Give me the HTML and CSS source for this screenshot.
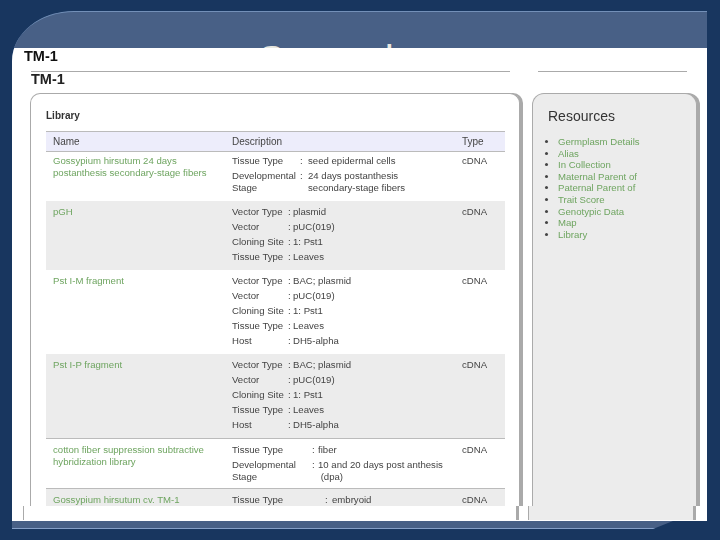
FILE: index.html
```html
<!DOCTYPE html>
<html lang="en">
<head>
<meta charset="utf-8">
<title>TM-1</title>
<link rel="stylesheet" href="styles.css">
</head>
<body>
<div class="slide">
  <div class="slide-title">Second</div>
  <div class="sheet">
    <div class="sheet-title">TM-1</div>
    <div class="rules"><span class="rule rule-main"></span><span class="rule rule-side"></span></div>
    <h1 class="page-title">TM-1</h1>
    <div class="columns">
      <section class="library">
        <h2 class="library-title">Library</h2>
        <table class="lib-table">
          <thead>
            <tr><th class="c-name"><span class="soft">Name</span></th><th class="c-desc"><span class="soft">Description</span></th><th><span class="soft">Type</span></th></tr>
          </thead>
          <tbody>
            <tr class="first">
              <td><a class="link">Gossypium hirsutum 24 days postanthesis secondary-stage fibers</a></td>
              <td><div class="spec spec-a">
                <span>Tissue Type</span><span>:</span><span>seed epidermal cells</span>
                <span>Developmental Stage</span><span>:</span><span>24 days postanthesis<br>secondary-stage fibers</span>
              </div></td>
              <td><span class="soft">cDNA</span></td>
            </tr>
            <tr class="alt">
              <td><a class="link">pGH</a></td>
              <td><div class="spec spec-b">
                <span>Vector Type</span><span>:</span><span>plasmid</span>
                <span>Vector</span><span>:</span><span>pUC(019)</span>
                <span>Cloning Site</span><span>:</span><span>1: Pst1</span>
                <span>Tissue Type</span><span>:</span><span>Leaves</span>
              </div></td>
              <td><span class="soft">cDNA</span></td>
            </tr>
            <tr>
              <td><a class="link">Pst I-M fragment</a></td>
              <td><div class="spec spec-b">
                <span>Vector Type</span><span>:</span><span>BAC; plasmid</span>
                <span>Vector</span><span>:</span><span>pUC(019)</span>
                <span>Cloning Site</span><span>:</span><span>1: Pst1</span>
                <span>Tissue Type</span><span>:</span><span>Leaves</span>
                <span>Host</span><span>:</span><span>DH5-alpha</span>
              </div></td>
              <td><span class="soft">cDNA</span></td>
            </tr>
            <tr class="alt">
              <td><a class="link">Pst I-P fragment</a></td>
              <td><div class="spec spec-b">
                <span>Vector Type</span><span>:</span><span>BAC; plasmid</span>
                <span>Vector</span><span>:</span><span>pUC(019)</span>
                <span>Cloning Site</span><span>:</span><span>1: Pst1</span>
                <span>Tissue Type</span><span>:</span><span>Leaves</span>
                <span>Host</span><span>:</span><span>DH5-alpha</span>
              </div></td>
              <td><span class="soft">cDNA</span></td>
            </tr>
            <tr class="ruled">
              <td><a class="link">cotton fiber suppression subtractive hybridization library</a></td>
              <td><div class="spec spec-c">
                <span>Tissue Type</span><span>:</span><span>fiber</span>
                <span>Developmental Stage</span><span>:</span><span>10 and 20 days post anthesis<br>&nbsp;(dpa)</span>
              </div></td>
              <td><span class="soft">cDNA</span></td>
            </tr>
            <tr class="alt ruled">
              <td><a class="link">Gossypium hirsutum cv. TM-1</a></td>
              <td><div class="spec spec-d">
                <span>Tissue Type</span><span>:</span><span>embryoid</span>
              </div></td>
              <td><span class="soft">cDNA</span></td>
            </tr>
          </tbody>
        </table>
      </section>
      <aside class="resources">
        <h2 class="res-title">Resources</h2>
        <ul class="res-list">
          <li><a class="link">Germplasm Details</a></li>
          <li><a class="link">Alias</a></li>
          <li><a class="link">In Collection</a></li>
          <li><a class="link">Maternal Parent of</a></li>
          <li><a class="link">Paternal Parent of</a></li>
          <li><a class="link">Trait Score</a></li>
          <li><a class="link">Genotypic Data</a></li>
          <li><a class="link">Map</a></li>
          <li><a class="link">Library</a></li>
        </ul>
      </aside>
    </div>
    <div class="stubs">
      <span class="stub-left"></span>
      <span class="stub-mid"></span>
      <span class="stub-panel"></span>
    </div>
  </div>
</div>
</body>
</html>
```
FILE: styles.css
```css
* { box-sizing: border-box; }
html, body { margin: 0; height: 100%; }
body {
  width: 720px;
  height: 540px;
  overflow: hidden;
  background: #18365f;
  font-family: "Liberation Sans", Arial, sans-serif;
  font-size: 9.6px;
  color: #444;
}
.slide {
  position: relative;
  width: 695px;
  height: 518px;
  margin: 11px 0 0 12px;
  padding-top: 36px;
  background: #486086;
  border-top: 1px solid #7390b8;
  border-bottom: 1px solid #86a0c8;
  border-top-left-radius: 62px 50px;
  overflow: hidden;
  clip-path: polygon(0 0, 100% 0, 100% 510px, 661px 510px, 641px 518px, 0 518px);
}
.slide-title {
  position: absolute;
  top: 25px;
  left: 246px;
  font-size: 40px;
  line-height: 46px;
  color: #e8e8e0;
}
.sheet {
  position: relative;
  height: 473px;
  background: #fff;
}
.sheet-title {
  height: 23px;
  padding-left: 12px;
  font-size: 14.5px;
  font-weight: bold;
  line-height: 17px;
  color: #111;
  filter: blur(0.3px);
}
.rules { display: flex; height: 1px; margin-left: 19px; }
.rule { display: block; height: 1px; background: #aaa; }
.rule-main { width: 479px; }
.rule-side { width: 149px; margin-left: 28px; }
.page-title {
  margin: 0;
  height: 21px;
  padding-left: 19px;
  font-size: 14.5px;
  font-weight: bold;
  line-height: 15px;
  color: #222;
  filter: blur(0.3px);
}
.columns {
  display: flex;
  height: 413px;
  margin-left: 18px;
  gap: 12px;
}
.library {
  width: 490px;
  padding: 15px 0 0 15px;
  background: #fff;
  border: 1px solid #aaa;
  border-bottom: 0;
  border-radius: 10px 10px 0 0;
  box-shadow: 3px 0 0 #aaa;
  overflow: hidden;
}
.library-title {
  margin: 0 0 8px;
  height: 14px;
  font-size: 10px;
  font-weight: bold;
  line-height: 14px;
  color: #333;
  filter: blur(0.3px);
}
.lib-table {
  width: 459px;
  border-collapse: collapse;
  table-layout: fixed;
}
.lib-table th {
  height: 20px;
  padding: 0 7px;
  background: #ededfb;
  border-top: 1px solid #bbb;
  border-bottom: 1px solid #bbb;
  font-size: 10px;
  font-weight: normal;
  text-align: left;
  color: #444;
}
.c-name { width: 179px; }
.c-desc { width: 230px; }
.lib-table td {
  padding: 5px 7px 7px;
  vertical-align: top;
  line-height: 12px;
}
.lib-table .first td { padding: 3px 7px 7px; }
.lib-table .ruled td { padding: 5px 7px; border-top: 1px solid #bbb; }
.alt td { background: #ececec; }
.soft { display: inline-block; filter: blur(0.3px); }
.link { display: inline-block; color: #6fa561; filter: blur(0.3px); }
.spec { display: grid; row-gap: 3px; }
.spec > span { filter: blur(0.3px); }
.spec > span:nth-child(3n) { white-space: nowrap; }
.spec-a { grid-template-columns: 68px 8px 1fr; }
.spec-b { grid-template-columns: 56px 5px 1fr; }
.spec-c { grid-template-columns: 80px 6px 1fr; }
.spec-d { grid-template-columns: 93px 7px 1fr; }
.resources {
  width: 165px;
  padding: 13px 0 0 15px;
  background: #ececec;
  border: 1px solid #aaa;
  border-bottom: 0;
  border-radius: 12px 12px 0 0;
  box-shadow: 3px 0 0 #aaa;
}
.res-title {
  margin: 0 0 11px;
  font-size: 14px;
  font-weight: normal;
  line-height: 18px;
  color: #333;
  filter: blur(0.3px);
}
.res-list {
  margin: 0;
  padding: 0 0 0 10px;
  line-height: 11.6px;
}
.stubs {
  display: flex;
  height: 14px;
  margin-left: 11px;
}
.stub-left { width: 1px; background: #aaa; }
.stub-mid { width: 3px; margin-left: 492px; background: #aaa; }
.stub-panel {
  width: 168px;
  margin-left: 9px;
  background: #ececec;
  border-left: 1px solid #aaa;
  border-right: 3px solid #aaa;
}
```
